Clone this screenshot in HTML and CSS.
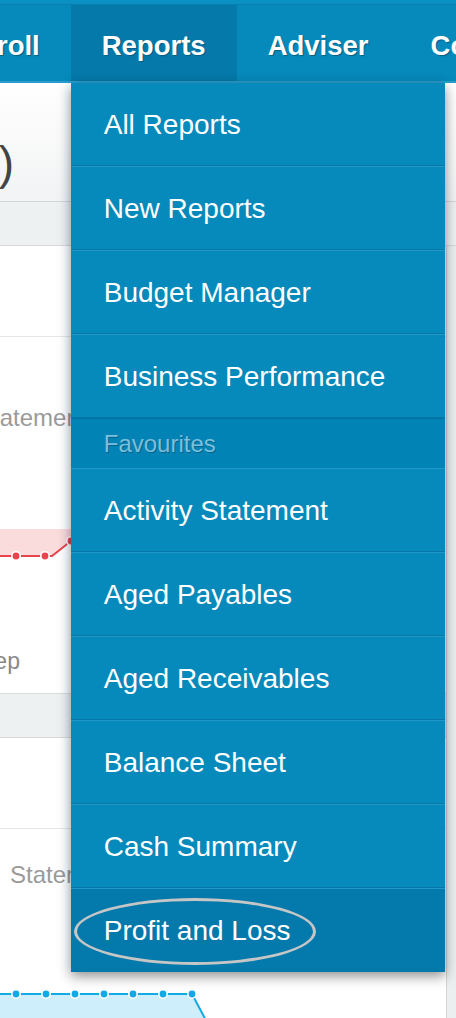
FILE: index.html
```html
<!DOCTYPE html>
<html lang="en">
<head>
    <meta charset="UTF-8">
    <meta name="viewport" content="width=device-width, initial-scale=1.0">
    <title>Reports menu</title>
    <link rel="stylesheet" href="styles.css">
</head>
<body>
    <div class="topstrip"></div>
    <nav class="mainnav">
        <ul>
            <li><a class="tab" href="#">Payroll</a></li>
            <li class="active">
                <a class="tab" href="#">Reports</a>
                <ul class="dropdown">
                    <li><a href="#">All Reports</a></li>
                    <li><a href="#">New Reports</a></li>
                    <li><a href="#">Budget Manager</a></li>
                    <li><a href="#">Business Performance</a></li>
                    <li class="heading">Favourites</li>
                    <li><a href="#">Activity Statement</a></li>
                    <li><a href="#">Aged Payables</a></li>
                    <li><a href="#">Aged Receivables</a></li>
                    <li><a href="#">Balance Sheet</a></li>
                    <li><a href="#">Cash Summary</a></li>
                    <li><a href="#" class="hover circled">Profit and Loss</a></li>
                </ul>
            </li>
            <li><a class="tab" href="#">Adviser</a></li>
            <li><a class="tab" href="#">Contacts</a></li>
            <li><a class="tab" href="#">Settings</a></li>
        </ul>
    </nav>

    <div class="page-title"><h1>Demo Company (AU)</h1></div>
    <div class="band"></div>

    <div class="cards">
        <div class="main-col">
            <section class="card card-first">
                <div class="card-head"></div>
                <div class="card-body">
                    <p class="label label-cut">Statement</p>
                    <svg class="chart chart-red" width="447" height="60" viewBox="0 0 447 60">
                        <polygon points="-5,14 90,14 71,26 52,41 -5,41" fill="#fbdcdd"/>
                        <polyline points="-5,41 52,41 71,26 95,8" fill="none" stroke="#e9444b" stroke-width="2"/>
                        <circle cx="16" cy="41" r="5" fill="#fff"/><circle cx="16" cy="41" r="3.4" fill="#e9444b"/>
                        <circle cx="45" cy="41" r="5" fill="#fff"/><circle cx="45" cy="41" r="3.4" fill="#e9444b"/>
                        <circle cx="71" cy="26" r="5" fill="#fff"/><circle cx="71" cy="26" r="3.4" fill="#e9444b"/>
                    </svg>
                    <p class="axis">Sep</p>
                </div>
            </section>
            <div class="band band-inner"></div>
            <section class="card card-second">
                <div class="card-head"></div>
                <div class="card-body">
                    <p class="label label-second">Statement</p>
                    <svg class="chart chart-blue" width="447" height="80" viewBox="0 0 447 80">
                        <polygon points="-5,44 192,44 210,80 -5,80" fill="#cdeefa"/>
                        <polyline points="-5,44 192,44 210,78" fill="none" stroke="#12a9e6" stroke-width="2"/>
                        <circle cx="16" cy="44" r="5" fill="#fff"/><circle cx="16" cy="44" r="3.4" fill="#12a9e6"/>
                        <circle cx="46" cy="44" r="5" fill="#fff"/><circle cx="46" cy="44" r="3.4" fill="#12a9e6"/>
                        <circle cx="75" cy="44" r="5" fill="#fff"/><circle cx="75" cy="44" r="3.4" fill="#12a9e6"/>
                        <circle cx="104" cy="44" r="5" fill="#fff"/><circle cx="104" cy="44" r="3.4" fill="#12a9e6"/>
                        <circle cx="133" cy="44" r="5" fill="#fff"/><circle cx="133" cy="44" r="3.4" fill="#12a9e6"/>
                        <circle cx="163" cy="44" r="5" fill="#fff"/><circle cx="163" cy="44" r="3.4" fill="#12a9e6"/>
                        <circle cx="192" cy="44" r="5" fill="#fff"/><circle cx="192" cy="44" r="3.4" fill="#12a9e6"/>
                    </svg>
                </div>
            </section>
        </div>
        <aside class="side"></aside>
    </div>
</body>
</html>
```

FILE: styles.css
```css
body {
    margin: 0;
    width: 456px;
    height: 1018px;
    overflow: hidden;
    background: #eceff0;
    font-family: "Liberation Sans", Arial, sans-serif;
}

/* top navigation */
.topstrip {
    height: 4px;
    background: #0b90c3;
    border-bottom: 1px solid #067eae;
}
.mainnav {
    height: 76px;
    background: #0689bb;
    border-bottom: 2px solid #2a9dcc;
    position: relative;
    z-index: 5;
}
.mainnav > ul {
    list-style: none;
    margin: 0 0 0 -83px;
    padding: 0;
    display: flex;
    height: 100%;
}
.mainnav > ul > li {
    position: relative;
}
.tab {
    display: flex;
    align-items: center;
    height: 100%;
    box-sizing: border-box;
    padding: 6px 31px 0;
    color: #fff;
    font-weight: bold;
    font-size: 27.5px;
    text-decoration: none;
    white-space: nowrap;
    text-shadow: 1px 1px 1px #045d82;
}
.active > .tab {
    background: #0479aa;
}

/* reports menu */
.dropdown {
    position: absolute;
    top: calc(100% + 2px);
    left: 0;
    width: 374px;
    margin: 0;
    padding: 0;
    list-style: none;
    background: #0689bb;
    box-shadow: 0 4px 12px rgba(0, 0, 0, 0.45);
}
.dropdown a {
    position: relative;
    display: flex;
    align-items: center;
    height: 84px;
    box-sizing: border-box;
    padding: 2px 0 0 33px;
    color: #fff;
    font-size: 28px;
    text-decoration: none;
    white-space: nowrap;
    border-top: 1px solid #1f97c7;
    border-bottom: 1px solid #0677a6;
}
.dropdown li:first-child a {
    border-top: 0;
    height: 83px;
}
.dropdown .heading {
    display: flex;
    align-items: center;
    height: 50px;
    box-sizing: border-box;
    padding-left: 33px;
    background: #0283b5;
    color: #7bbfdc;
    font-size: 24px;
    text-shadow: 1px 1px 0 #03638a;
    border-top: 1px solid #03719e;
}
.dropdown a.hover {
    background: #0479ab;
}
.circled::after {
    content: "";
    position: absolute;
    left: 3px;
    top: 9px;
    width: 242px;
    height: 67px;
    box-sizing: border-box;
    border: 3px solid #c6c6c6;
    border-radius: 50%;
}

/* page behind the menu */
.page-title {
    height: 119px;
    box-sizing: border-box;
    padding-top: 57px;
    background: linear-gradient(#fff, #f2f3f4);
    border-bottom: 1px solid #d6d6d6;
}
.page-title h1 {
    width: 14px;
    display: flex;
    justify-content: flex-end;
    white-space: nowrap;
    margin: 0;
    font-size: 46px;
    font-weight: normal;
    line-height: 1;
    color: #444;
}
.band {
    height: 43px;
    background: #eef1f2;
    border-bottom: 1px solid #d9d9d9;
}
.band-inner {
    border-top: 1px solid #dcdcdc;
}
.cards {
    display: flex;
}
.main-col {
    width: 446px;
    border-right: 1px solid #d4d4d4;
    background: #fff;
}
.side {
    flex: 1;
}
.card-head {
    height: 90px;
    border-bottom: 1px solid #e6e6e6;
}
.card-body {
    overflow: hidden;
}
.card-first .card-body {
    height: 356px;
}
.card-second .card-body {
    height: 240px;
}
.label {
    margin: 0;
    font-size: 24px;
    line-height: 26px;
    color: #9a9a9a;
    white-space: nowrap;
}
.label-cut {
    margin: 68px 0 0 -23px;
}
.label-second {
    margin: 33px 0 0 10px;
}
.chart {
    display: block;
}
.chart-red {
    margin-top: 84px;
}
.chart-blue {
    margin-top: 62px;
}
.axis {
    margin: 74px 0 0 -21px;
    font-size: 23px;
    line-height: 24px;
    color: #888;
}
```
